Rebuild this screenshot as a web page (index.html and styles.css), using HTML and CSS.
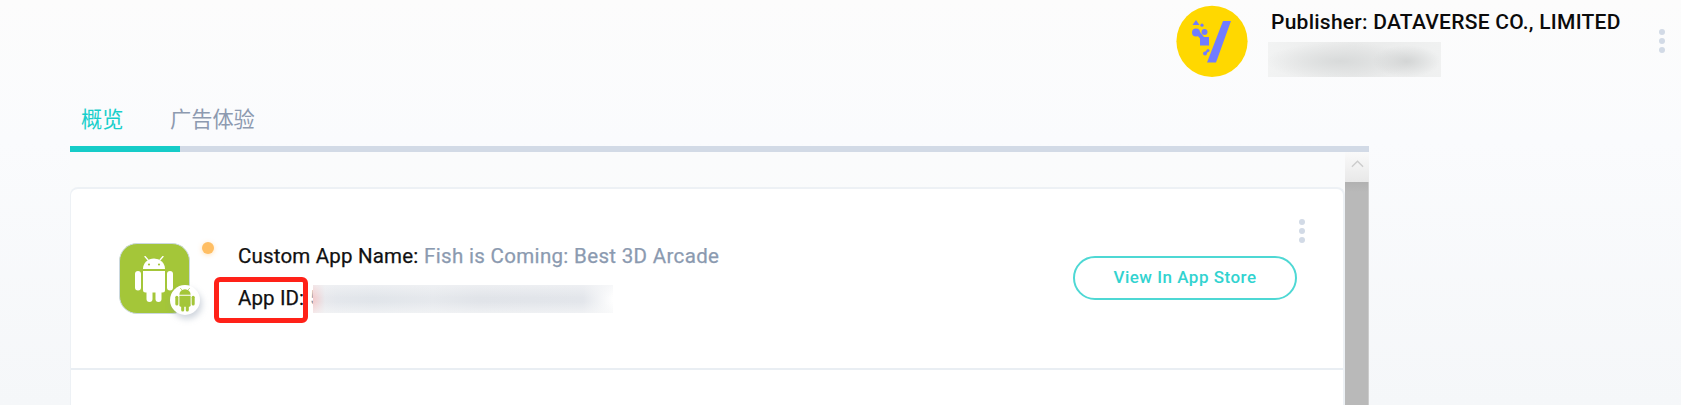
FILE: index.html
```html
<!DOCTYPE html>
<html lang="zh-CN">
<head>
<meta charset="utf-8">
<title>概览</title>
<link rel="stylesheet" href="styles.css">
</head>
<body>
<svg class="defs" aria-hidden="true">
  <symbol id="robot" viewBox="0 0 38 47">
    <path d="M8 13a11 10.500 0 0 1 22 0z"/>
    <path d="M13 4L10 0.500M25 4L28 0.500" stroke="currentColor" stroke-width="1.300" stroke-linecap="round"/>
    <path d="M8 15h22v19a2.500 2.500 0 0 1-2.500 2.500h-17A2.500 2.500 0 0 1 8 34z"/>
    <rect x="0" y="15" width="6" height="19.500" rx="3"/><rect x="32" y="15" width="6" height="19.500" rx="3"/>
    <rect x="11.500" y="31" width="6" height="15" rx="3"/><rect x="20.500" y="31" width="6" height="15" rx="3"/>
    <circle class="eye" cx="14" cy="8.500" r="1.100"/><circle class="eye" cx="24" cy="8.500" r="1.100"/>
  </symbol>
</svg>
<div class="page">
  <header class="header">
    <svg class="avatar" viewBox="0 0 72 72">
      <circle cx="36" cy="36.300" r="35.600" fill="#ffd800"/>
      <g fill="#717cff">
        <path d="M47 16h8L40 57.500h-9zM20 15l3.500 5h-7z"/>
        <circle cx="26" cy="20.200" r="1.600"/><circle cx="20" cy="27.500" r="4"/><circle cx="28.500" cy="27" r="3"/>
        <path d="M21 30l3-3 4 5h5v8.500h-9v-7z"/>
        <circle cx="29" cy="48.500" r="2"/><circle cx="32" cy="45.500" r="1.500"/>
        <path d="M29 47l2-2 1 2-2 2z"/>
      </g>
    </svg>
    <div class="publisher">
      <div class="publisher-name">Publisher: DATAVERSE CO., LIMITED</div>
      <div class="redacted redacted-publisher"></div>
    </div>
    <div class="dots header-dots"><i></i><i></i><i></i></div>
  </header>
  <main class="content">
    <nav class="tabs"><a class="tab active">概览</a><a class="tab">广告体验</a></nav>
    <div class="viewport">
      <section class="card">
        <div class="app">
          <div class="app-icon">
            <svg class="robot"><use href="#robot"/></svg>
            <span class="platform"><svg><use href="#robot"/></svg></span>
            <span class="status"></span>
          </div>
          <div class="details">
            <div class="name-row"><span class="label">Custom App Name:</span><span class="value">Fish is Coming: Best 3D Arcade</span></div>
            <div class="id-row"><span class="id-label">App ID:</span><span class="id-value">5</span><span class="redacted redacted-id"></span><span class="highlight"></span></div>
          </div>
          <div class="actions">
            <div class="dots"><i></i><i></i><i></i></div>
            <a class="store">View In App Store</a>
          </div>
        </div>
        <div class="next"></div>
      </section>
      <div class="scrollbar">
        <div class="arrow"><svg viewBox="0 0 14 8"><path d="M1 7l6-6 6 6" fill="none" stroke="#ccc" stroke-width="1.500"/></svg></div>
        <div class="thumb"></div>
      </div>
    </div>
  </main>
</div>
</body>
</html>
```
FILE: styles.css
```css
* { box-sizing: border-box; }
body { margin: 0; background: #fff; font-family: Roboto, "Noto Sans CJK SC", sans-serif; }
.defs { position: absolute; width: 0; height: 0; }
.page { width: 1681px; height: 405px; overflow: hidden; background: linear-gradient(#fcfcfc, #fafbfd 35%, #f5f7f9); }
.header { height: 92px; display: flex; padding: 5px 15px 0 1176px; }
.avatar { width: 72px; height: 72px; flex: none; }
.publisher { margin-left: 23px; width: 371px; padding-top: 5px; }
.publisher-name { height: 25px; line-height: 25px; font-size: 21px; font-weight: 500; color: #0b0b0b; white-space: nowrap; letter-spacing: .25px; }
.redacted-publisher { width: 173px; height: 35px; margin: 7px 0 0 -3px; background: radial-gradient(ellipse 34px 16px at 80% 55%, #d3d5d5, transparent), radial-gradient(ellipse 75px 19px at 42% 55%, #d8dada, transparent), linear-gradient(90deg, #f2f3f3, #e9eaea 50%, #f0f1f1); }
.dots { width: 6px; display: flex; flex-direction: column; gap: 3px; }
.dots i { width: 6px; height: 6px; border-radius: 50%; background: #d2dae6; }
.header-dots { margin: 24px 0 0 17px; }
.content { margin-left: 70px; width: 1299px; }
.tabs { height: 60px; display: flex; background: linear-gradient(#d2dae6, #d2dae6) bottom / 100% 6px no-repeat; }
.tab { height: 60px; line-height: 52px; font-size: 21.2px; color: #8d9ab0; padding-left: 10px; font-family: "Noto Sans CJK SC", sans-serif; }
.tab.active { width: 110px; margin-right: -20px; padding-left: 11px; color: #18cfcb; border-bottom: 6px solid #16ccc8; }
.viewport { height: 253px; display: flex; background: linear-gradient(#fafbfc, #fafcfb); }
.card { width: 1275px; margin-top: 35px; border: 2px solid #edf1f5; border-left-width: 1px; border-radius: 8px 8px 0 0; border-bottom: 0; background: #fff; overflow: hidden; }
.app { height: 181px; border-bottom: 2px solid #e9eef3; display: flex; padding: 1px 0 0 48px; }
.app-icon { position: relative; flex: none; width: 71px; height: 71px; margin-top: 53px; border-radius: 18px; background: #a4c639; border: 1px solid #cbd8df; color: #fff; }
.robot { display: block; width: 38px; height: 47px; margin: 12px 0 0 15px; fill: currentColor; }
.eye { fill: #a4c639; }
.platform { position: absolute; left: 50px; top: 41px; width: 30px; height: 30px; border-radius: 50%; background: #fff; box-shadow: 2px 4px 6px #8797aa66; color: #a4c639; display: grid; place-items: center; }
.platform svg { width: 20px; height: 24px; fill: currentColor; }
.status { position: absolute; left: 82px; top: -2px; width: 12px; height: 12px; border-radius: 50%; background: #ffbe63; box-shadow: 0 1px 5px #ffbe6370; }
.details { flex: none; width: 720px; padding: 53px 0 0 48px; font-size: 20.5px; font-weight: 450; color: #111; -webkit-text-stroke: .25px currentColor; }
.name-row, .id-row { height: 26px; line-height: 26px; display: flex; white-space: nowrap; }
.label { width: 186px; letter-spacing: .18px; }
.value { color: #8b9ab0; letter-spacing: .33px; }
.id-row { position: relative; margin-top: 16px; }
.id-label { width: 72px; letter-spacing: .1px; }
.id-value { width: 12px; color: #8b9ab0; }
.redacted-id { position: relative; width: 300px; height: 28px; margin-left: -9px; background: linear-gradient(#f3f4f6aa, transparent 45%, transparent 60%, #f6f7f8aa), linear-gradient(90deg, #f3cccd, #e8e9ed 4%, #e4e7ec 8%, #e1e5ea 20%, #e6e9ed 40%, #e1e4e9 55%, #e3e6eb 90%, #fff); }
.highlight { position: absolute; left: -24px; top: -8px; width: 94px; height: 46px; border: 5px solid #ff2118; border-radius: 6px; }
.actions { flex: none; margin-left: 163px; width: 232px; padding-top: 29px; }
.actions .dots { margin-left: 226px; }
.store { display: block; width: 224px; height: 44px; margin-top: 13px; line-height: 39px; border: 2px solid #4ed8d4; border-radius: 22px; text-align: center; font-size: 17px; font-weight: 500; letter-spacing: .5px; color: #32d3d0; }
.scrollbar { width: 24px; }
.arrow { height: 30px; padding: 8px 0 0 6px; background: linear-gradient(#fafafa, #e8e8e8); }
.arrow svg { display: block; width: 13px; height: 8px; }
.thumb { height: 223px; background: linear-gradient(#b1b1b1, #b9b9b9 10px); border-right: 1px solid #ccc; }
```
